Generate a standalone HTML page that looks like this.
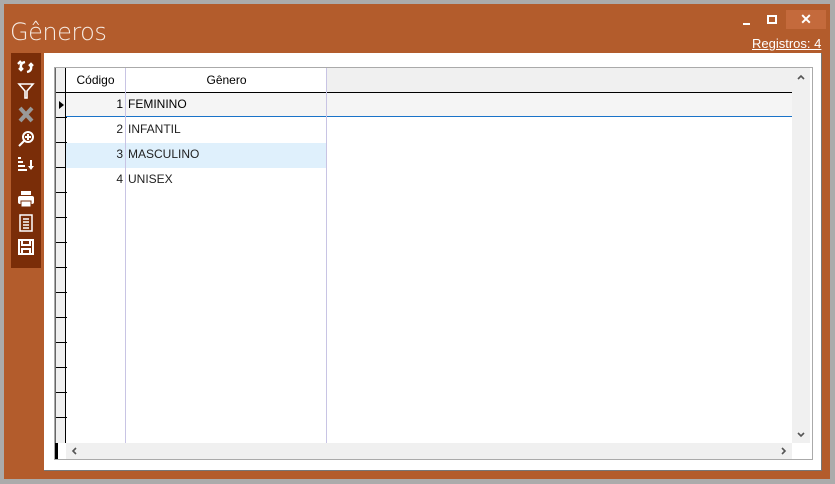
<!DOCTYPE html>
<html><head><style>
*{margin:0;padding:0;box-sizing:border-box}
body{width:835px;height:484px;background:#ababab;position:relative;overflow:hidden;font-family:"Liberation Sans",sans-serif}
.win{position:absolute;left:4px;top:4px;width:826px;height:475px;background:#b35c2c}
.title{position:absolute;left:6px;top:14px;font-size:24px;color:#f6ebe3;font-family:"DejaVu Sans","Liberation Sans",sans-serif;font-weight:300;letter-spacing:-0.5px}
.reg{position:absolute;font-size:13px;color:#fff;text-decoration:underline}
.close{position:absolute;width:40px;height:19px;background:#c46a3c;color:#fff;text-align:center;font-size:14px;font-weight:bold;line-height:19px}
.max{position:absolute;width:10px;height:9px;border:2px solid #fff}
.min{position:absolute;width:7px;height:2px;background:#fff}
.tb{position:absolute;left:11px;top:53px;width:30px;height:215px;background:#7a2d08}
.tb svg{position:absolute;left:6px}
.panel{position:absolute;left:44px;top:53px;width:778px;height:418px;background:#fff;border-right:1px solid #777;border-bottom:1px solid #777}
.grid{position:absolute;left:54px;top:67px;width:759px;height:393px;border:1px solid #aaa;background:#fff;overflow:hidden}
.ind{position:absolute;left:0;top:0;width:11px;height:375px;background:#f0f0f0;border-right:1px solid #000;border-left:1px solid #666}
.hl{position:absolute;left:0;width:11px;height:1px;background:#000}
.hdr{position:absolute;top:0;height:25px;background:#fff;font-size:12px;color:#000;line-height:24px;text-align:center}
.vl{position:absolute;top:0;width:1px;height:375px;background:#c8c4e4}
.cell{position:absolute;font-size:12px;color:#222;line-height:25px;height:25px}
.vs{position:absolute;left:737px;top:0;width:18px;height:375px;background:#f0f0f0}
.hs{position:absolute;left:11px;top:375px;width:726px;height:16px;background:#f0f0f0}
</style></head><body>
<div class="win">
<div class="title">Gêneros</div>
<div class="min" style="left:739px;top:19px"></div>
<div class="max" style="left:763px;top:11px"></div>
<div class="close" style="left:782px;top:6px">✕</div>
<div class="reg" style="left:748px;top:32px">Registros: 4</div>
</div>
<div class="tb">
<svg style="top:6px" width="18" height="16" viewBox="0 0 18 16" fill="none" stroke="#fff" stroke-width="2.4"><path d="M8 3 Q3 4 4 9 M1 5 L4 2 M2 9l2 2 2-2"/><path d="M10 13 Q15 12 14 7 M12 7l2-2 2 2"/></svg>
<svg style="top:29px" width="18" height="18" viewBox="0 0 18 18" fill="none" stroke="#fff" stroke-width="1.6"><path d="M2 2h14L10 9v7H8V9z"/></svg>
<svg style="top:53px" width="18" height="17" viewBox="0 0 18 17" stroke="#999" stroke-width="4"><path d="M3 2l12 13M15 2L3 15"/></svg>
<svg style="top:77px" width="18" height="18" viewBox="0 0 18 18" fill="none" stroke="#fff" stroke-width="2"><circle cx="11" cy="7" r="5"/><path d="M7 11l-5 5M11 4v6M8 7h6"/></svg>
<svg style="top:103px" width="18" height="16" viewBox="0 0 18 16" fill="#fff"><rect x="1" y="1" width="3" height="2"/><rect x="1" y="5" width="5" height="2"/><rect x="1" y="9" width="7" height="2"/><rect x="1" y="13" width="9" height="2"/><rect x="13" y="4" width="2" height="7"/><path d="M11 10h6l-3 4z"/></svg>
<svg style="top:137px" width="18" height="18" viewBox="0 0 18 18" fill="#fff"><rect x="4" y="1" width="10" height="4"/><rect x="1" y="6" width="16" height="8" rx="2"/><rect x="4" y="11" width="10" height="6" fill="#fff" stroke="#7a2d08"/></svg>
<svg style="top:161px" width="18" height="18" viewBox="0 0 18 18" fill="none" stroke="#fff" stroke-width="1.5"><rect x="3" y="1" width="12" height="16"/><path d="M6 5h6M6 8h6M6 11h6M6 14h6"/></svg>
<svg style="top:185px" width="18" height="18" viewBox="0 0 18 18" fill="none" stroke="#fff" stroke-width="2"><rect x="2" y="2" width="14" height="14"/><path d="M5 2v5h8V2M5 16v-5h8v5"/></svg>
</div>
<div class="panel"></div>
<div class="grid">
<div class="ind">
<div class="hl" style="top:24px"></div><div class="hl" style="top:49px"></div><div class="hl" style="top:74px"></div><div class="hl" style="top:99px"></div><div class="hl" style="top:124px"></div><div class="hl" style="top:149px"></div><div class="hl" style="top:174px"></div><div class="hl" style="top:199px"></div><div class="hl" style="top:224px"></div><div class="hl" style="top:249px"></div><div class="hl" style="top:274px"></div><div class="hl" style="top:299px"></div><div class="hl" style="top:324px"></div><div class="hl" style="top:349px"></div>
<div style="position:absolute;left:3px;top:33px;width:0;height:0;border-top:4px solid transparent;border-bottom:4px solid transparent;border-left:5px solid #000"></div>
</div>
<div class="hdr" style="left:11px;width:60px;border-right:1px solid #ddd">Código</div>
<div class="hdr" style="left:71px;width:201px">Gênero</div>
<div class="hdr" style="left:272px;width:465px;background:#f0f0f0"></div>
<div style="position:absolute;left:11px;top:24px;width:726px;height:1px;background:#000"></div>
<div style="position:absolute;left:11px;top:25px;width:726px;height:24px;background:#f5f5f5;border-bottom:1px solid #1a73c8"></div>
<div style="position:absolute;left:11px;top:75px;width:261px;height:25px;background:#dff0fc"></div>
<div class="vl" style="left:70px"></div><div class="vl" style="left:271px"></div>
<div class="cell" style="left:11px;width:57px;top:24px;text-align:right;color:#000">1</div><div class="cell" style="left:73px;top:24px;color:#000">FEMININO</div>
<div class="cell" style="left:11px;width:57px;top:49px;text-align:right">2</div><div class="cell" style="left:73px;top:49px">INFANTIL</div>
<div class="cell" style="left:11px;width:57px;top:74px;text-align:right">3</div><div class="cell" style="left:73px;top:74px">MASCULINO</div>
<div class="cell" style="left:11px;width:57px;top:99px;text-align:right">4</div><div class="cell" style="left:73px;top:99px">UNISEX</div>
<div class="vs">
<svg style="position:absolute;left:5px;top:6px" width="8" height="6" viewBox="0 0 8 6" fill="none" stroke="#555" stroke-width="1.6"><path d="M1 5l3-3 3 3"/></svg>
<svg style="position:absolute;left:5px;top:364px" width="8" height="6" viewBox="0 0 8 6" fill="none" stroke="#555" stroke-width="1.6"><path d="M1 1l3 3 3-3"/></svg>
</div>
<div class="hs">
<svg style="position:absolute;left:5px;top:4px" width="6" height="8" viewBox="0 0 6 8" fill="none" stroke="#555" stroke-width="1.6"><path d="M5 1L2 4l3 3"/></svg>
<svg style="position:absolute;left:715px;top:4px" width="6" height="8" viewBox="0 0 6 8" fill="none" stroke="#555" stroke-width="1.6"><path d="M1 1l3 3-3 3"/></svg>
</div>
<div style="position:absolute;left:0;top:375px;width:3px;height:16px;background:#000"></div>
</div>
</body></html>
